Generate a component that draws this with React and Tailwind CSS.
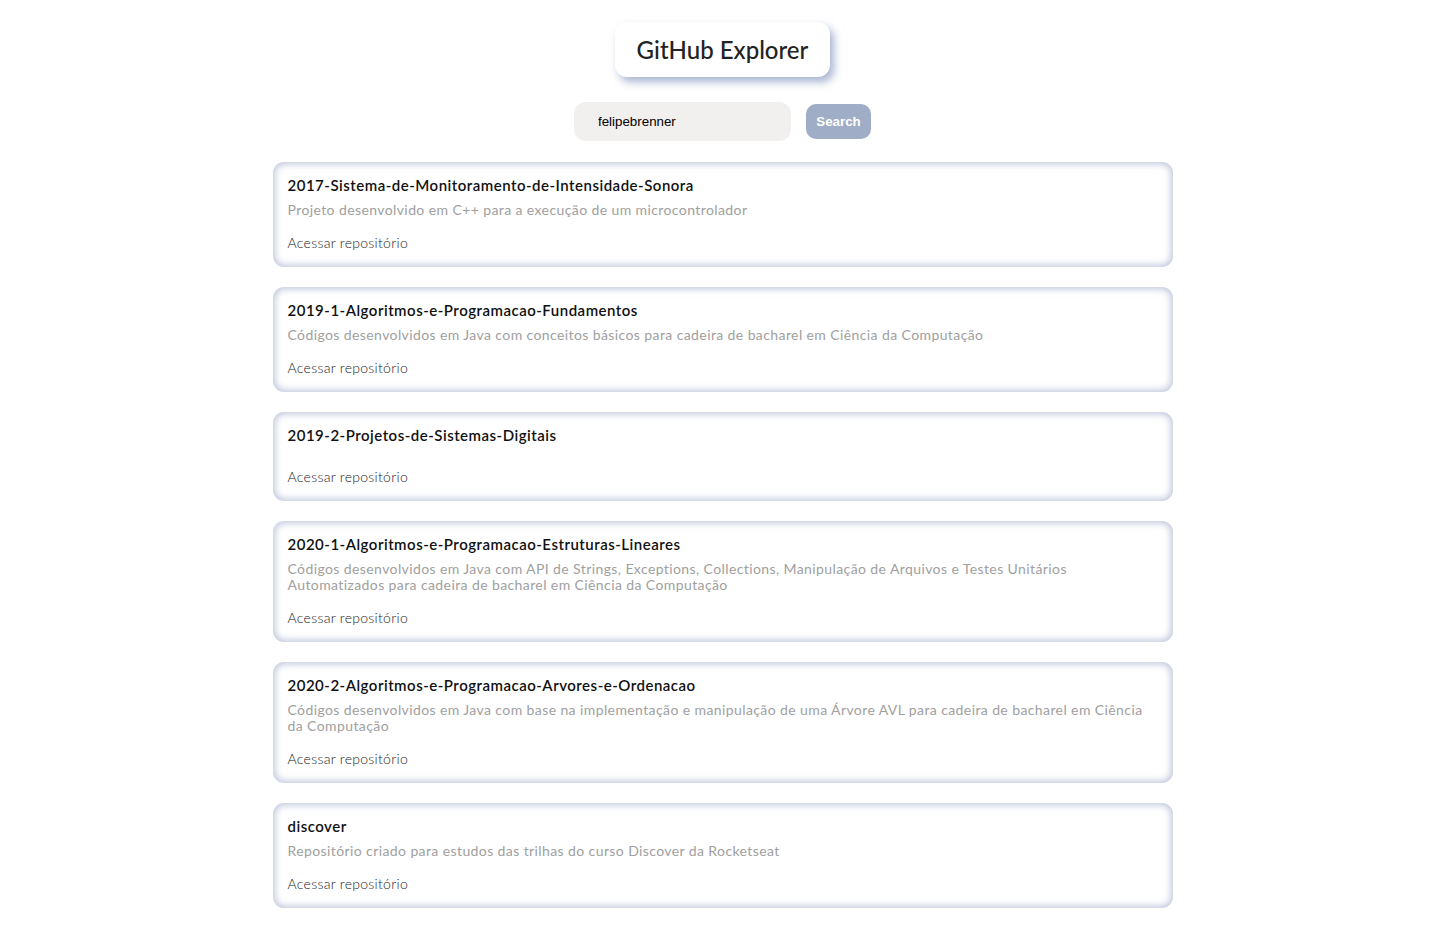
import React from "react";

const repos = [
  {
    name: "2017-Sistema-de-Monitoramento-de-Intensidade-Sonora",
    desc: "Projeto desenvolvido em C++ para a execução de um microcontrolador",
  },
  {
    name: "2019-1-Algoritmos-e-Programacao-Fundamentos",
    desc: "Códigos desenvolvidos em Java com conceitos básicos para cadeira de bacharel em Ciência da Computação",
  },
  { name: "2019-2-Projetos-de-Sistemas-Digitais", desc: "" },
  {
    name: "2020-1-Algoritmos-e-Programacao-Estruturas-Lineares",
    desc: "Códigos desenvolvidos em Java com API de Strings, Exceptions, Collections, Manipulação de Arquivos e Testes Unitários Automatizados para cadeira de bacharel em Ciência da Computação",
  },
  {
    name: "2020-2-Algoritmos-e-Programacao-Arvores-e-Ordenacao",
    desc: "Códigos desenvolvidos em Java com base na implementação e manipulação de uma Árvore AVL para cadeira de bacharel em Ciência da Computação",
  },
  {
    name: "discover",
    desc: "Repositório criado para estudos das trilhas do curso Discover da Rocketseat",
  },
];

export default function App() {
  return (
    <div className="min-h-screen bg-white font-['Lato',sans-serif] flex flex-col items-center pt-[22px] pb-[17px] pr-[9px]">
      <h1 className="bg-white rounded-[12px] w-[215px] h-[55px] flex items-center justify-center text-[24px] font-medium text-[#222] shadow-[4px_5px_8px_rgba(140,155,195,0.75)]">
        GitHub Explorer
      </h1>
      <div className="flex items-center mt-[25px] gap-[15px]">
        <input
          defaultValue="felipebrenner"
          className="w-[217px] h-[39px] bg-[#f2efef] rounded-[12px] pl-[24px] text-[13.33px] text-black font-['Liberation_Sans',Arial,sans-serif] outline-none"
        />
        <button className="w-[65px] h-[35px] bg-[#a0adc6] rounded-[10px] text-white font-bold text-[13.33px] font-['Liberation_Sans',Arial,sans-serif]">
          Search
        </button>
      </div>
      <div className="flex flex-col gap-[20px] mt-[21px] w-[900px]">
        {repos.map((r) => (
          <div
            key={r.name}
            className="flex flex-col rounded-[11px] bg-white px-[15px] pt-[14px] pb-[16px] shadow-[inset_0_0_7px_2px_rgba(150,160,195,0.6)]"
          >
            <h3 className="text-[15px] leading-[18px] font-semibold tracking-[0.5px] text-[#111]">{r.name}</h3>
            <p className="mt-[8px] text-[14px] leading-[16px] font-normal tracking-[0.4px] text-[#a0a0a0]">{r.desc}</p>
            <a className="block mt-[16px] text-[14px] leading-[17px] font-light tracking-[0.3px] text-[#222]">
              Acessar repositório
            </a>
          </div>
        ))}
      </div>
    </div>
  );
}
